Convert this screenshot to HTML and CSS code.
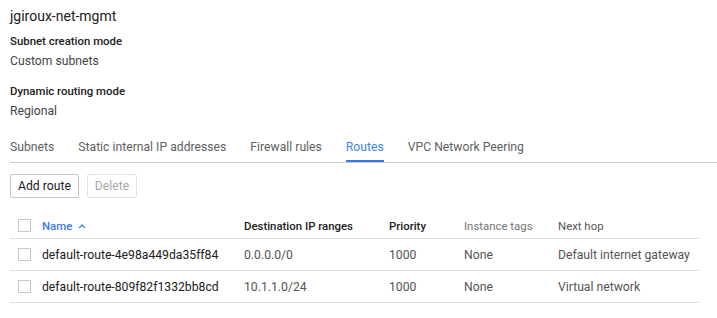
FILE: index.html
```html
<!DOCTYPE html>
<html>
<head>
    <title>jgiroux-net-mgmt</title>
    <link rel="stylesheet" href="styles.css">
</head>
<body>
    <div class="page">
        <h1 class="title">jgiroux-net-mgmt</h1>

        <div class="field">
            <div class="field-label">Subnet creation mode</div>
            <div class="field-value">Custom subnets</div>
        </div>
        <div class="field">
            <div class="field-label">Dynamic routing mode</div>
            <div class="field-value">Regional</div>
        </div>

        <div class="tabs">
            <div class="tab">Subnets</div>
            <div class="tab">Static internal IP addresses</div>
            <div class="tab">Firewall rules</div>
            <div class="tab active">Routes</div>
            <div class="tab">VPC Network Peering</div>
        </div>

        <div class="actions">
            <button class="btn">Add route</button>
            <button class="btn" disabled>Delete</button>
        </div>

        <table class="routes">
            <colgroup>
                <col style="width: 32px">
                <col style="width: 202px">
                <col style="width: 145px">
                <col style="width: 75px">
                <col style="width: 94px">
                <col style="width: 141px">
            </colgroup>
            <thead>
                <tr>
                    <th class="check"><span class="box"></span></th>
                    <th class="sorted">Name
                        <svg class="sort-icon" width="8" height="6" viewBox="0 0 8 6">
                            <path d="M1 5 L4 2 L7 5" fill="none" stroke="#4285f4" stroke-width="1.4"/>
                        </svg>
                    </th>
                    <th>Destination IP ranges</th>
                    <th>Priority</th>
                    <th class="plain">Instance tags</th>
                    <th class="plain dark">Next hop</th>
                </tr>
            </thead>
            <tbody>
                <tr>
                    <td class="check"><span class="box"></span></td>
                    <td class="name">default-route-4e98a449da35ff84</td>
                    <td>0.0.0.0/0</td>
                    <td>1000</td>
                    <td>None</td>
                    <td>Default internet gateway</td>
                </tr>
                <tr>
                    <td class="check"><span class="box"></span></td>
                    <td class="name">default-route-809f82f1332bb8cd</td>
                    <td>10.1.1.0/24</td>
                    <td>1000</td>
                    <td>None</td>
                    <td>Virtual network</td>
                </tr>
            </tbody>
        </table>
    </div>
</body>
</html>
```

FILE: styles.css
```css
body {
    margin: 0;
    font-family: Roboto, "Liberation Sans", Arial, sans-serif;
    color: #212121;
    background: #fff;
}
.page {
    padding: 4px 0 0 10px;
}
.title {
    margin: 0;
    font-size: 14px;
    font-weight: 400;
    line-height: 24px;
}
.field {
    margin-top: 3px;
}
.field + .field {
    margin-top: 10px;
}
.field-label {
    font-size: 11.4px;
    font-weight: 500;
    line-height: 20px;
}
.field-value {
    font-size: 12.2px;
    line-height: 20px;
    color: #444;
}

.tabs {
    display: flex;
    gap: 24px;
    margin-top: 12px;
    border-bottom: 1px solid #ccc;
}
.tab {
    font-size: 12.2px;
    line-height: 20px;
    color: #5f5f5f;
    padding: 4px 0 3px;
    border-bottom: 2px solid transparent;
}
.tab.active {
    color: #4285f4;
    border-bottom-color: #3b78e7;
}

.actions {
    display: flex;
    gap: 8px;
    margin-top: 11px;
}
.btn {
    font-family: inherit;
    font-size: 12.2px;
    height: 24px;
    padding: 0 7px;
    background: #fff;
    color: #212121;
    border: 1px solid #c6c6c6;
    border-radius: 2px;
}
.btn:disabled {
    color: #aaa;
    border-color: #e2e2e2;
}

.routes {
    margin-top: 15px;
    width: 689px;
    table-layout: fixed;
    border-collapse: collapse;
    font-size: 12.2px;
}
.routes th,
.routes td {
    height: 31px;
    padding: 0;
    text-align: left;
    border-bottom: 1px solid #e0e0e0;
    white-space: nowrap;
}
.routes th {
    height: 25px;
    font-size: 11.4px;
    font-weight: 500;
    color: #212121;
}
.routes th.plain {
    font-weight: 400;
    color: #757575;
}
.routes th.dark {
    color: #555;
}
.routes th.sorted {
    color: #3b78e7;
}
.sort-icon {
    margin-left: 3px;
    vertical-align: 1px;
}
.routes td {
    color: #555;
}
.routes td.name {
    color: #212121;
}
.routes .check {
    padding-left: 8px;
}
.box {
    display: block;
    width: 11px;
    height: 11px;
    border: 1px solid #c8c8c8;
}
```
